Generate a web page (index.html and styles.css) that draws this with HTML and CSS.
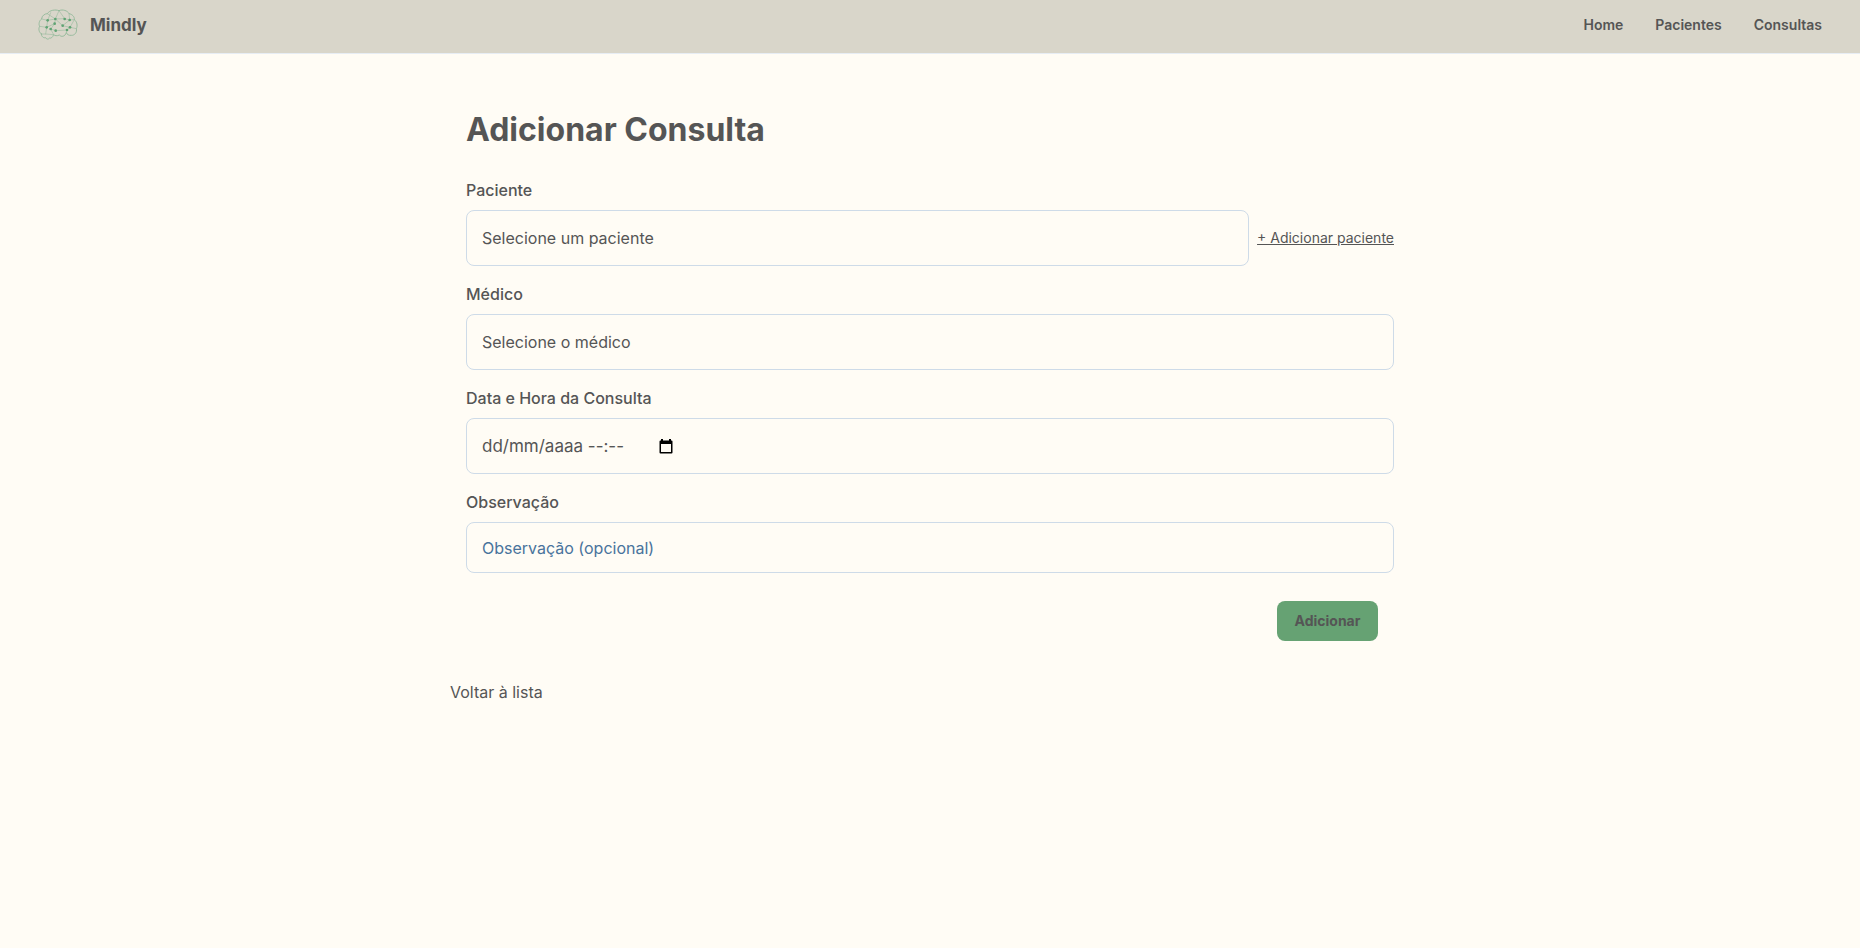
FILE: index.html
```html
<!DOCTYPE html>
<html lang="pt-BR">
<head>
<meta charset="utf-8">
<meta name="viewport" content="width=device-width, initial-scale=1">
<title>Mindly</title>
<link rel="stylesheet" href="styles.css">
</head>
<body>
<header class="topbar">
  <div class="brand">
    <svg class="brand-logo" viewBox="12 15 120 96" aria-hidden="true">
      <g fill="none" stroke="#8fb797" stroke-width="2" stroke-linejoin="round" stroke-linecap="round">
        <path stroke-width="2.6" d="M22 90 C14 84 13 74 17 67 C13 60 16 49 23 45 C23 35 33 29 40 29 C47 18 64 16 75 20 C86 15 101 20 105 29 C115 31 122 38 121 47 C130 54 131 66 127 74 C130 84 122 95 112 94 C104 95 99 91 97 86 C93 98 82 100 76 93 C69 97 62 95 59 92 C56 100 51 104 47 102 C43 107 37 106 35 101 C28 103 22 97 22 90Z"/>
        <path stroke-width="1.6" d="M23 45 L41 49 L64 45 L75 20 M40 29 L64 45 M41 49 L50 26 M64 45 L92 44 L107 48 L121 47 M92 44 L75 20 M107 48 L105 29 M64 45 L62 59 L50 75 M38 70 L17 67 M41 49 L38 70 M62 59 L38 70 M64 45 L86 65 L107 48 M86 65 L108 70 L127 74 M108 70 L99 78 L65 80 L50 75 M99 78 L97 86 M108 70 L121 47 M50 75 L59 92 L35 90 L22 90 M35 90 L38 70"/>
      </g>
      <g fill="#5fa373">
        <circle cx="41" cy="49" r="4"/><circle cx="64" cy="45" r="4"/><circle cx="92" cy="45" r="4"/><circle cx="107" cy="48" r="4"/>
        <circle cx="62" cy="59" r="4"/><circle cx="38" cy="70" r="4"/><circle cx="50" cy="75" r="4"/><circle cx="65" cy="80" r="4"/>
        <circle cx="86" cy="65" r="4"/><circle cx="108" cy="70" r="4"/><circle cx="99" cy="78" r="4"/>
      </g>
    </svg>
    <span class="brand-name">Mindly</span>
  </div>
  <nav class="nav">
    <a href="#home">Home</a>
    <a href="#pacientes">Pacientes</a>
    <a href="#consultas">Consultas</a>
  </nav>
</header>
<main class="content">
  <h1 class="title">Adicionar Consulta</h1>
  <form class="form">
    <div class="field">
      <label class="label" for="paciente">Paciente</label>
      <div class="row">
        <select class="control" id="paciente"><option>Selecione um paciente</option></select>
        <a class="add-link" href="#novo-paciente">+ Adicionar paciente</a>
      </div>
    </div>
    <div class="field">
      <label class="label" for="medico">Médico</label>
      <select class="control" id="medico"><option>Selecione o médico</option></select>
    </div>
    <div class="field">
      <label class="label" for="data">Data e Hora da Consulta</label>
      <div class="control date-control">
        <input class="date-input" id="data" type="text" placeholder="dd/mm/aaaa --:--">
        <button class="date-button" type="button" aria-label="Abrir calendário">
          <svg class="date-icon" viewBox="0 0 14 15" aria-hidden="true">
            <path fill="#000" fill-rule="evenodd" d="M2 0h2v1.500h6V0h2v1.500h.5A1 1 0 0 1 13.500 2.500V13.500a1 1 0 0 1-1 1H1.500a1 1 0 0 1-1-1V2.500a1 1 0 0 1 1-1H2ZM2 5v8h10V5Z"/>
          </svg>
        </button>
      </div>
    </div>
    <div class="field">
      <label class="label" for="obs">Observação</label>
      <input class="control control-short" id="obs" type="text" placeholder="Observação (opcional)">
    </div>
    <div class="actions"><button class="submit" type="submit">Adicionar</button></div>
  </form>
  <a class="back" href="#lista">Voltar à lista</a>
</main>
</body>
</html>
```
FILE: styles.css
```css
*, *::before, *::after { box-sizing: border-box; }

body {
  margin: 0;
  min-height: 100vh;
  background: #fffcf5;
  color: #555555;
  font-family: Inter, sans-serif;
  font-size: 16px;
  line-height: 24px;
}

a { color: inherit; text-decoration: none; }

.topbar {
  display: flex;
  align-items: center;
  justify-content: space-between;
  padding: 9px 38px 12px;
  background: #d9d6ca;
  border-bottom: 1px solid #e7edf4;
}
.brand { display: flex; align-items: center; gap: 12px; }
.brand-logo { display: block; width: 40px; height: 32px; }
.brand-name { font-size: 17px; font-weight: 700; }
.nav { display: flex; gap: 32px; font-size: 14px; font-weight: 600; line-height: 22px; }

.content {
  display: flex;
  flex-direction: column;
  max-width: 960px;
  margin: 0 auto;
  padding: 56px 0 32px;
}
.title {
  margin: 0;
  padding: 0 16px 28px;
  font-size: 32px;
  font-weight: 700;
  line-height: 40px;
}

.form { display: flex; flex-direction: column; gap: 16px; padding: 0 16px; }
.field { display: flex; flex-direction: column; gap: 8px; }
.label { font-weight: 500; }
.row { display: flex; align-items: center; gap: 8px; }

.control {
  flex: 1 1 auto;
  width: 100%;
  min-width: 0;
  height: 56px;
  padding: 0 15px;
  border: 1px solid #cedbe8;
  border-radius: 8px;
  background: transparent;
  color: inherit;
  font: inherit;
  appearance: none;
}
.control-short { height: 51px; }
.control::placeholder { color: #49739c; opacity: 1; }

.add-link { font-size: 14px; text-decoration: underline; white-space: nowrap; }

.date-control { display: flex; align-items: center; gap: 16px; }
.date-input {
  width: 161px;
  padding: 0;
  border: 0;
  background: transparent;
  color: inherit;
  font: inherit;
  font-size: 17px;
}
.date-input::placeholder { color: inherit; opacity: 1; }
.date-button { padding: 0; border: 0; background: transparent; }
.date-icon { display: block; width: 14px; height: 15px; }

.actions { display: flex; justify-content: flex-end; padding: 12px 16px; }
.submit {
  min-width: 101px;
  height: 40px;
  padding: 0 16px;
  border: 0;
  border-radius: 8px;
  background: #66a273;
  color: inherit;
  font: inherit;
  font-size: 14px;
  font-weight: 700;
}
.back { align-self: flex-start; margin-top: 27px; }
```
